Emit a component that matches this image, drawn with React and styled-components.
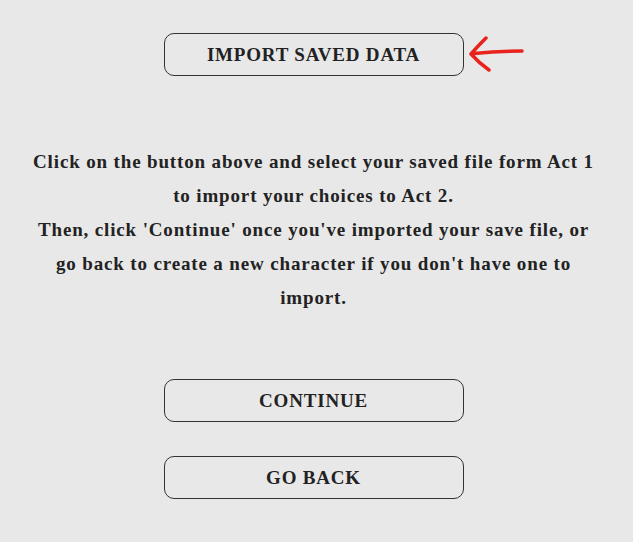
import React from 'react';
import styled, { createGlobalStyle } from 'styled-components';

const GlobalStyle = createGlobalStyle`
  html, body {
    margin: 0;
    padding: 0;
    background: #e8e8e8;
  }
  body {
    font-family: "Liberation Serif", "Times New Roman", serif;
    color: #222;
  }
`;

const Page = styled.div`
  display: flex;
  flex-direction: column;
  align-items: center;
  padding: 33px 14px 0 8px;
`;

const ImportRow = styled.div`
  position: relative;
  display: flex;
  align-items: center;
`;

const Button = styled.button`
  width: 300px;
  height: 43px;
  margin-top: ${(p) => p.$top || 0}px;
  background: transparent;
  border: 1px solid #333;
  border-radius: 10px;
  font-family: "Liberation Serif", "Times New Roman", serif;
  font-weight: bold;
  font-size: 19px;
  letter-spacing: 0.8px;
  color: #222;
  cursor: pointer;
`;

const Arrow = styled.svg`
  position: absolute;
  left: 300px;
  top: 0;
`;

const Message = styled.p`
  max-width: 568px;
  margin: 69px 0 0;
  text-align: center;
  font-weight: bold;
  font-size: 19px;
  line-height: 34px;
  letter-spacing: 0.85px;
`;

export default function App() {
  return (
    <>
      <GlobalStyle />
      <Page>
        <ImportRow>
          <Button>IMPORT SAVED DATA</Button>
          <Arrow width="64" height="44" viewBox="0 0 64 44">
            <path
              d="M22 5 Q13 14 7 21 Q15 30 25 37 M10 20.5 Q35 18 58 18"
              stroke="#e8231e"
              strokeWidth="3.5"
              strokeLinecap="round"
              strokeLinejoin="round"
              fill="none"
            />
          </Arrow>
        </ImportRow>
        <Message>
          Click on the button above and select your saved file form Act 1 to import your choices to Act 2.
          <br />
          Then, click 'Continue' once you've imported your save file, or go back to create a new character if you don't have one to import.
        </Message>
        <Button $top={64}>CONTINUE</Button>
        <Button $top={34}>GO BACK</Button>
      </Page>
    </>
  );
}
